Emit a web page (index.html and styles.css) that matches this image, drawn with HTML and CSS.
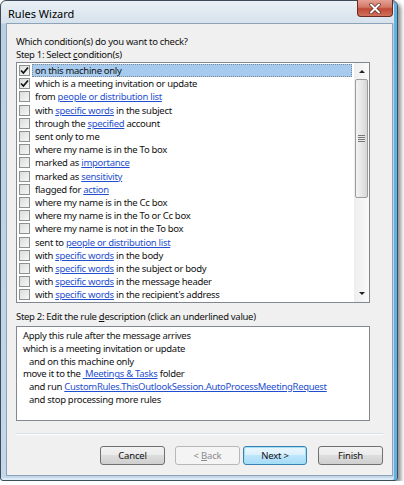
FILE: index.html
```html
<!DOCTYPE html>
<html lang="en">
<head>
  <meta charset="UTF-8">
  <title>Rules Wizard</title>
  <link rel="stylesheet" href="styles.css">
</head>
<body>
  <div class="window">
    <div class="titlebar">
      <span class="title">Rules Wizard</span>
      <div class="close">
        <svg width="14" height="11" viewBox="0 0 14 11">
          <path d="M3 1.5 L11 9.5 M11 1.5 L3 9.5" stroke="#5a2a22" stroke-width="3.4" stroke-linecap="round"/>
          <path d="M3 1.5 L11 9.5 M11 1.5 L3 9.5" stroke="#fff" stroke-width="2" stroke-linecap="round"/>
        </svg>
      </div>
    </div>

    <div class="client">
      <div class="label">Which condition(s) do you want to check?</div>
      <div class="label">Step 1: Select <u>c</u>ondition(s)</div>

      <div class="listbox">
        <ul class="conditions">
          <li class="selected">
            <span class="check"><svg width="9" height="9" viewBox="0 0 9 9"><path d="M1 4.5 L3.4 7 L8 1.5" fill="none" stroke="#111" stroke-width="1.7"/></svg></span>
            <span class="text">on this machine only</span>
          </li>
          <li>
            <span class="check"><svg width="9" height="9" viewBox="0 0 9 9"><path d="M1 4.5 L3.4 7 L8 1.5" fill="none" stroke="#111" stroke-width="1.7"/></svg></span>
            <span class="text">which is a meeting invitation or update</span>
          </li>
          <li><span class="check"></span><span class="text">from <a>people or distribution list</a></span></li>
          <li><span class="check"></span><span class="text">with <a>specific words</a> in the subject</span></li>
          <li><span class="check"></span><span class="text">through the <a>specified</a> account</span></li>
          <li><span class="check"></span><span class="text">sent only to me</span></li>
          <li><span class="check"></span><span class="text">where my name is in the To box</span></li>
          <li><span class="check"></span><span class="text">marked as <a>importance</a></span></li>
          <li><span class="check"></span><span class="text">marked as <a>sensitivity</a></span></li>
          <li><span class="check"></span><span class="text">flagged for <a>action</a></span></li>
          <li><span class="check"></span><span class="text">where my name is in the Cc box</span></li>
          <li><span class="check"></span><span class="text">where my name is in the To or Cc box</span></li>
          <li><span class="check"></span><span class="text">where my name is not in the To box</span></li>
          <li><span class="check"></span><span class="text">sent to <a>people or distribution list</a></span></li>
          <li><span class="check"></span><span class="text">with <a>specific words</a> in the body</span></li>
          <li><span class="check"></span><span class="text">with <a>specific words</a> in the subject or body</span></li>
          <li><span class="check"></span><span class="text">with <a>specific words</a> in the message header</span></li>
          <li><span class="check"></span><span class="text">with <a>specific words</a> in the recipient's address</span></li>
        </ul>

        <div class="scrollbar">
          <div class="arrow up"></div>
          <div class="thumb"><span class="grip"></span></div>
          <div class="track"></div>
          <div class="arrow down"></div>
        </div>
      </div>

      <div class="label step2">Step 2: Edit the rule <u>d</u>escription (click an underlined value)</div>

      <div class="description">
        <div>Apply this rule after the message arrives</div>
        <div>which is a meeting invitation or update</div>
        <div class="indent">and on this machine only</div>
        <div>move it to the <a>&nbsp;Meetings &amp; Tasks</a> folder</div>
        <div class="indent">and run <a>CustomRules.ThisOutlookSession.AutoProcessMeetingRequest</a></div>
        <div class="indent">and stop processing more rules</div>
      </div>

      <div class="separator"></div>

      <div class="buttons">
        <button class="cancel">Cancel</button>
        <button class="back" disabled>&lt; <u>B</u>ack</button>
        <button class="next default">Next &gt;</button>
        <button class="finish">Finish</button>
      </div>
    </div>
  </div>
</body>
</html>
```

FILE: styles.css
```css
body {
  margin: 0;
  background-color: #fff;
  font-family: 'Noto Sans', sans-serif;
  font-size: 9.5px;
  letter-spacing: -0.3px;
  color: #111;
}

.window {
  width: 398px;
  height: 481px;
  box-sizing: border-box;
  display: flex;
  flex-direction: column;
  padding: 0 4px 4px 5px;
  border: 1px solid #3e4c5a;
  border-radius: 6px 6px 3px 3px;
  background: linear-gradient(to bottom, #eaf0f5 0, #d6e2ed 22px, #b9cfe3 23px, #c4d8ea 100%);
  box-shadow: inset -3px 0 0 #5fb2e6, inset 0 -2px 0 #dcebf7, 3px 3px 4px rgba(0, 0, 0, 0.45);
}

.titlebar {
  height: 22px;
  display: flex;
  align-items: flex-start;
}

.title {
  padding: 5px 0 0 2px;
  font-size: 11px;
  letter-spacing: 0;
  color: #000;
}

.close {
  margin: -1px 0 0 auto;
  width: 36px;
  height: 17px;
  box-sizing: border-box;
  border: 1px solid #6b2a20;
  border-top: none;
  border-radius: 0 0 4px 4px;
  background: linear-gradient(to bottom, #e6a295 0, #d27866 45%, #bf4a35 55%, #d0715c 100%);
  display: flex;
  align-items: center;
  justify-content: center;
}

.client {
  flex: 1;
  display: flex;
  flex-direction: column;
  padding: 11px 9px 10px 9px;
  border: 1px solid #8fa3b6;
  background-color: #f0f0f0;
}

.label {
  line-height: 13px;
  white-space: nowrap;
}

.step2 {
  margin-top: 7px;
}

u {
  text-decoration: underline;
}

a {
  color: #1f4fcf;
  text-decoration: underline;
}

.listbox {
  margin-top: 1px;
  width: 354px;
  height: 241px;
  box-sizing: border-box;
  border: 1px solid #828790;
  background-color: #fff;
  display: flex;
}

.conditions {
  flex: 1;
  margin: 0;
  padding: 1px 2px 0 2px;
  list-style: none;
  overflow: hidden;
}

.conditions li {
  height: 13.2px;
  display: flex;
  align-items: center;
  white-space: nowrap;
}

.check {
  width: 11px;
  height: 11px;
  box-sizing: border-box;
  margin: 0 2px 0 0;
  border: 1px solid #8e8f8f;
  background: linear-gradient(135deg, #dcdcdc 0, #f6f6f6 100%);
  display: flex;
  align-items: center;
  justify-content: center;
  flex-shrink: 0;
}

.text {
  flex: 1;
  height: 13px;
  line-height: 12px;
  padding-left: 2px;
  box-sizing: border-box;
  border: 1px solid transparent;
}

.selected .text {
  background-color: #a7cbef;
  border: 1px dotted #7b8794;
}

.scrollbar {
  width: 15px;
  display: flex;
  flex-direction: column;
  background: linear-gradient(to right, #eeeeee, #fafafa);
}

.arrow {
  height: 16px;
  position: relative;
}

.arrow::after {
  content: '';
  position: absolute;
  left: 5px;
  border-left: 3px solid transparent;
  border-right: 3px solid transparent;
}

.arrow.up::after {
  top: 7px;
  border-bottom: 3px solid #222;
}

.arrow.down::after {
  top: 6px;
  border-top: 3px solid #222;
}

.thumb {
  height: 119px;
  margin: 0 1px;
  box-sizing: border-box;
  border: 1px solid #9c9c9c;
  border-radius: 2px;
  background: linear-gradient(to right, #f4f4f4 0, #e6e6e6 50%, #d6d6d6 100%);
  display: flex;
  align-items: center;
  justify-content: center;
}

.grip {
  width: 7px;
  height: 7px;
  background: repeating-linear-gradient(to bottom, #777 0, #777 1px, #e8e8e8 1px, #e8e8e8 2px);
}

.track {
  flex: 1;
}

.description {
  margin-top: 3px;
  width: 354px;
  height: 95px;
  box-sizing: border-box;
  padding: 3px 6px;
  border: 1px solid #828790;
  background-color: #fff;
  line-height: 12.8px;
  white-space: nowrap;
}

.indent {
  padding-left: 6px;
}

.separator {
  margin-top: 12px;
  height: 1px;
  border-top: 1px solid #d5dfe5;
  background-color: #fff;
}

.buttons {
  margin-top: 11px;
  display: flex;
  justify-content: flex-end;
}

button {
  width: 65px;
  height: 19px;
  padding: 0;
  border: 1px solid #707070;
  border-radius: 3px;
  font-family: 'Noto Sans', sans-serif;
  font-size: 9.5px;
  letter-spacing: -0.2px;
  color: #111;
  background: linear-gradient(to bottom, #f2f2f2 0, #ebebeb 50%, #dddddd 50%, #cfcfcf 100%);
}

.back {
  margin-left: 10px;
  color: #8a8a8a;
  border-color: #b5b8bb;
  background: #f4f4f4;
}

.next {
  width: 64px;
  margin-left: 3px;
}

.default {
  border-color: #3c7fb1;
  background: linear-gradient(to bottom, #eaf6fd 0, #d9f0fc 50%, #bee6fd 50%, #a7d9f5 100%);
  box-shadow: inset 0 0 0 1px #9fe2f8;
}

.finish {
  margin-left: 11px;
}
```
